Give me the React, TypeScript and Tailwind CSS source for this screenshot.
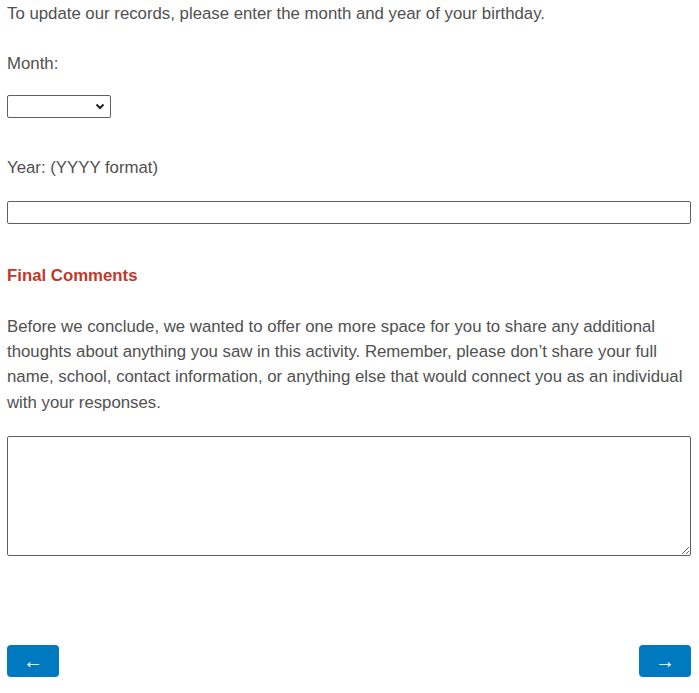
import { useState } from "react";

const months = [
  "January", "February", "March", "April", "May", "June",
  "July", "August", "September", "October", "November", "December",
];

export default function App() {
  const [month, setMonth] = useState("");
  const [year, setYear] = useState("");
  const [comments, setComments] = useState("");

  return (
    <div className="min-h-[693px] bg-white pl-[7px] pr-[8px] pt-[1px] text-[16.8px] leading-[25.4px] text-[#505050] font-['Liberation_Sans',Arial,sans-serif]">
      <p>To update our records, please enter the month and year of your birthday.</p>

      <label htmlFor="month" className="mt-[25px] block">Month:</label>
      <div className="relative mt-[18px] h-[23px] w-[104px]">
        <select
          id="month"
          value={month}
          onChange={(e) => setMonth(e.target.value)}
          className="block h-full w-full appearance-none rounded-[2px] border border-[#5f5f5f] bg-white px-1 text-[14px] leading-none text-[#333]"
        >
          <option value=""></option>
          {months.map((m) => (
            <option key={m} value={m}>{m}</option>
          ))}
        </select>
        <svg
          className="pointer-events-none absolute right-[6px] top-[8px]"
          width="10"
          height="7"
          viewBox="0 0 10 7"
        >
          <path d="M1.5 1.5 5 5l3.5-3.5" fill="none" stroke="#222" strokeWidth="2" />
        </svg>
      </div>

      <label htmlFor="year" className="mt-[37px] block">Year: (YYYY format)</label>
      <input
        id="year"
        type="text"
        value={year}
        onChange={(e) => setYear(e.target.value)}
        className="mt-[21px] block h-[23px] w-full rounded-[2px] border border-[#5f5f5f] bg-white px-1 text-[14px] outline-none"
      />

      <h2 className="mt-[39px] font-bold text-[#c0392b]">Final Comments</h2>

      <p className="mt-[25px]">
        Before we conclude, we wanted to offer one more space for you to share any additional
        thoughts about anything you saw in this activity. Remember, please don’t share your full
        name, school, contact information, or anything else that would connect you as an individual
        with your responses.
      </p>

      <textarea
        value={comments}
        onChange={(e) => setComments(e.target.value)}
        className="mt-[21px] block h-[120px] w-full rounded-[2px] border border-[#5f5f5f] bg-white p-1 text-[14px] outline-none"
      />

      <div className="mt-[89px] flex justify-between">
        <button className="flex h-[32px] w-[52px] items-center justify-center rounded-[4px] bg-[#0079c1] text-[20px] leading-none text-white">
          ←
        </button>
        <button className="flex h-[32px] w-[52px] items-center justify-center rounded-[4px] bg-[#0079c1] text-[20px] leading-none text-white">
          →
        </button>
      </div>
    </div>
  );
}
